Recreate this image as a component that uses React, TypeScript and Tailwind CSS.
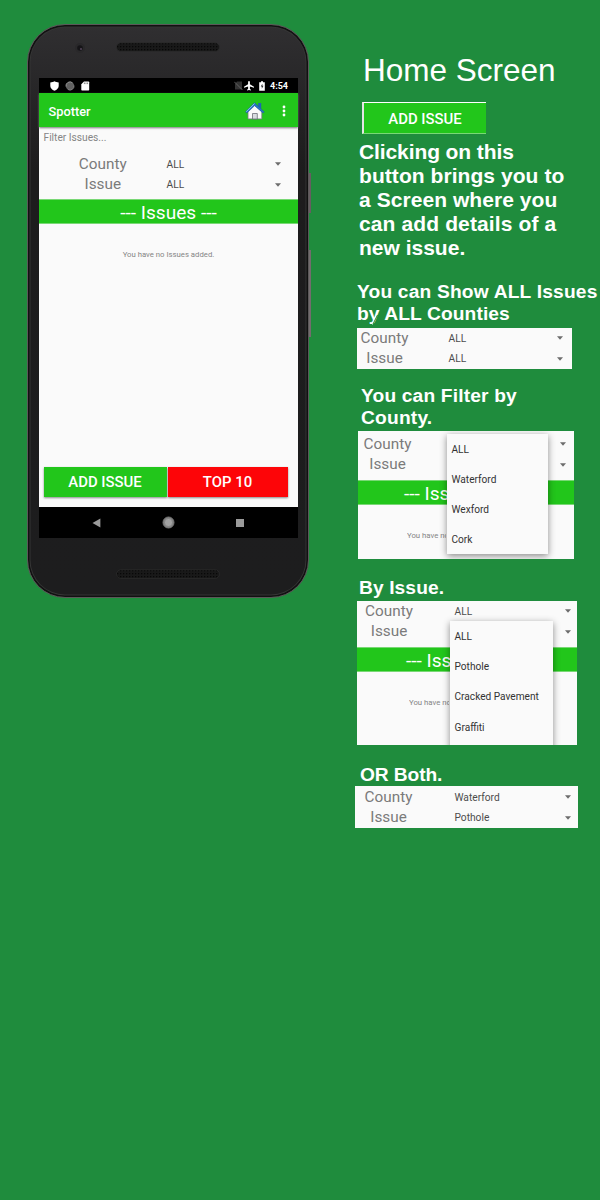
import React from "react";

function Caret() {
  return (
    <svg width="6" height="4" viewBox="0 0 6 4" className="block shrink-0">
      <path d="M0 0.2h6L3 3.8z" fill="#6c6c6c" />
    </svg>
  );
}

type RowProps = { label: string; value?: string; labelClass: string; caretClass: string };

function FilterRow({ label, value, labelClass, caretClass }: RowProps) {
  return (
    <div className="flex h-[20.5px] items-center whitespace-nowrap">
      <div className={"shrink-0 text-center text-[15.3px] leading-none text-[#7b7b7b] " + labelClass}>{label}</div>
      <div className="flex-1 pt-px text-[10.2px] leading-none text-[#4c4c4c]">{value}</div>
      <div className={caretClass}>
        <Caret />
      </div>
    </div>
  );
}

function Speaker() {
  return (
    <svg width="104" height="10" viewBox="0 0 104 10" className="block">
      <defs>
        <pattern id="mesh" width="3" height="3" patternUnits="userSpaceOnUse">
          <rect width="3" height="3" fill="#191919" />
          <rect x="1" y="1" width="1.3" height="1.3" fill="#080808" />
        </pattern>
      </defs>
      <rect x="0.5" y="0.8" width="103" height="8.6" rx="4.3" fill="url(#mesh)" stroke="#2e2e2e" strokeWidth="0.7" />
    </svg>
  );
}

function StatusBar() {
  return (
    <div className="flex h-[15px] shrink-0 items-center bg-black pr-[10px] pl-[11px] text-white">
      <svg width="9" height="10" viewBox="0 0 9 10">
        <path d="M4.5 0.3C3.3 1.1 2 1.4 0.3 1.5V5c0 2.200 1.800 3.900 4.200 4.700C6.900 8.900 8.700 7.200 8.700 5V1.500C7 1.400 5.700 1.100 4.500 0.300z" fill="#fff" />
      </svg>
      <svg width="10" height="10" viewBox="0 0 10 10" className="ml-[6px]">
        <circle cx="5" cy="5" r="4.200" fill="#626262" />
        <path d="M1 5.500A4 4 0 0 1 7.500 1.800" fill="none" stroke="#929292" />
        <path d="M9 4.500A4 4 0 0 1 3 8.500" fill="none" stroke="#858585" strokeWidth="0.800" />
      </svg>
      <svg width="9" height="10" viewBox="0 0 9 10" className="ml-[6px]">
        <path d="M3 0.500h4.500q0.700 0 0.700 0.700v7.600q0 0.700-0.700 0.700h-6.500q-0.700 0-0.700-0.700V3.300z" fill="#fff" />
        <path d="M3.400 1.500v1.600M5 1.500v1.600M6.600 1.500v1.600" stroke="#555" strokeWidth="0.700" />
      </svg>
      <div className="flex-1" />
      <svg width="9" height="9" viewBox="0 0 9 9">
        <path d="M3 0.500H8v8H1V3z" fill="#333" />
        <path d="M0.300 0.800l8 8" stroke="#666" strokeWidth="0.900" />
      </svg>
      <svg width="10" height="10" viewBox="0 0 20 20" className="ml-[1.500px]">
        <path d="M20 13.500v-2l-8.200-5V1.800a1.800 1.800 0 0 0-3.600 0v4.700L0 11.500v2l8.200-2.500v5l-2.200 1.600v1.500l4-1 4 1v-1.500L11.800 16v-5z" fill="#fff" />
      </svg>
      <svg width="6" height="10" viewBox="0 0 6 10" className="ml-[4.500px]">
        <path d="M2 0.300h2v0.900h1.800v8.600H0.200V1.200H2z" fill="#fff" />
        <path d="M3.400 2.800L1.700 5.600h1.100v2.200l1.700-3H3.400z" fill="#333" />
      </svg>
      <span className="ml-[5px] pt-px text-[9px] leading-none font-bold">4:54</span>
    </div>
  );
}

function HomeIcon() {
  return (
    <svg width="20" height="18" viewBox="0 0 20 18" className="block">
      <path d="M13.200 1h3v6l-3-2.600z" fill="#1d66b5" />
      <path d="M3 9.300L9.500 3l7.300 6.700v7.200H3z" fill="#fafafa" stroke="#777a83" strokeWidth="0.800" />
      <path d="M7.500 17v-5.500h4.800v5.500z" fill="#d8dbe0" stroke="#6d7078" strokeWidth="0.800" />
      <path d="M0.500 9.800L9.500 0.700l9.800 9.200-1.300 1.100-8.400-7.300-7.800 7.400z" fill="#2a74c6" stroke="#1c5ca5" strokeWidth="0.500" />
      <path d="M1.200 9.700L9.500 1.500" stroke="#8fc4ef" strokeWidth="0.900" />
    </svg>
  );
}

function IssuesBar({ className, children }: { className: string; children: React.ReactNode }) {
  return (
    <div className={"flex h-[25px] items-center overflow-hidden border-y border-[#79d875] bg-[#22c61b] pt-[2px] text-[19.100px] leading-none whitespace-nowrap text-white " + className}>
      {children}
    </div>
  );
}

function Phone() {
  return (
    <div className="relative mt-[24px] ml-[27px] h-[574px] w-[284px] shrink-0">
      <div className="absolute top-[149px] right-0 h-[40px] w-[4px] bg-[#665d61]" />
      <div className="absolute top-[226px] right-0 h-[87px] w-[4px] bg-[#736c6e]" />
      <div className="relative flex h-[574px] w-[282px] flex-col rounded-[38px] border-[1.500px] border-[#5b5859] bg-linear-to-b from-[#302f31] via-[#1d1c1d] via-25% to-[#1d1d1e] px-[11px] shadow-[inset_0_0_0_1.500px_#111,inset_0_0_0_2.500px_#353535]">
        <div className="flex h-[53px] shrink-0 items-start pt-[17px]">
          <svg width="12" height="12" viewBox="0 0 12 12" className="ml-[34.500px]">
            <circle cx="6" cy="6" r="5" fill="#29282a" />
            <circle cx="6" cy="6" r="2.800" fill="#151417" />
            <circle cx="7" cy="7" r="1" fill="#55465c" />
          </svg>
          <div className="ml-[30px]">
            <Speaker />
          </div>
        </div>
        <div className="flex h-[460px] w-[259px] shrink-0 flex-col bg-[#fafafa]">
          <StatusBar />
          <div className="relative flex h-[34px] shrink-0 items-center bg-[#22c61b] pt-px pl-[9.500px] shadow-[0_1px_2px_#777]">
            <span className="pt-[3px] text-[12.800px] leading-none font-medium text-white">Spotter</span>
            <div className="ml-auto">
              <HomeIcon />
            </div>
            <svg width="4" height="12" viewBox="0 0 4 12" className="mr-[12px] ml-[17px]">
              <circle cx="2" cy="2" r="1.400" fill="#fff" />
              <circle cx="2" cy="6" r="1.400" fill="#fff" />
              <circle cx="2" cy="10" r="1.400" fill="#fff" />
            </svg>
          </div>
          <div className="pt-[6px] pl-[4.500px] text-[10.200px] leading-none text-[#858585]">Filter Issues...</div>
          <div className="mt-[11px]">
            <FilterRow label="County" value="ALL" labelClass="w-[127.500px]" caretClass="mr-[17px]" />
            <FilterRow label="Issue" value="ALL" labelClass="w-[127.500px]" caretClass="mr-[17px]" />
          </div>
          <div className="mt-[4px]">
            <IssuesBar className="justify-center">--- Issues ---</IssuesBar>
          </div>
          <div className="mt-[26.500px] text-center text-[7.750px] leading-none text-[#858585]">You have no Issues added.</div>
          <div className="mt-auto mb-[10.500px] flex gap-[1px] px-[4.500px] text-[14.900px] leading-none font-medium text-white">
            <div className="flex h-[30px] w-[123px] items-center justify-center bg-[#22c61b] pt-[2px] shadow-[0_1px_2px_#888]">ADD ISSUE</div>
            <div className="flex h-[30px] w-[120px] items-center justify-center bg-[#fd0508] pt-[2px] shadow-[0_1px_2px_#888]">TOP 10</div>
          </div>
          <div className="flex h-[31px] shrink-0 items-center bg-black">
            <svg width="9" height="10" viewBox="0 0 9 10" className="ml-[53px]">
              <path d="M0.500 5L8.400 0.500v9z" fill="#9a9a9a" />
            </svg>
            <svg width="13" height="13" viewBox="0 0 13 13" className="ml-[60.500px]">
              <circle cx="6.500" cy="6.500" r="5.500" fill="#858585" stroke="#777" />
              <circle cx="6.500" cy="6.500" r="4" fill="#a2a2a2" stroke="#777" strokeWidth="0.500" />
            </svg>
            <div className="ml-[61px] h-[8px] w-[8px] bg-[#9a9a9a]" />
          </div>
        </div>
        <div className="flex justify-center pt-[31px]">
          <Speaker />
        </div>
      </div>
    </div>
  );
}

type PanelProps = {
  className: string;
  labelClass: string;
  caretClass: string;
  titleClass: string;
  noteClass: string;
  menuClass: string;
  value?: string;
  options: string[];
};

function MenuPanel({ className, labelClass, caretClass, titleClass, noteClass, menuClass, value, options }: PanelProps) {
  return (
    <div className={"relative overflow-hidden bg-[#fafafa] " + className}>
      <FilterRow label="County" value={value} labelClass={labelClass} caretClass={caretClass} />
      <FilterRow label="Issue" labelClass={labelClass} caretClass={caretClass} />
      <div className="mt-[5px]">
        <IssuesBar className={titleClass}>--- Iss</IssuesBar>
      </div>
      <div className={"mt-[26.500px] text-[7.750px] leading-none whitespace-nowrap text-[#858585] " + noteClass}>You have no</div>
      <div className={"absolute bg-[#fafafa] pt-[0.500px] pl-[5px] text-[10.150px] text-[#333] shadow-[0_2px_7px_rgba(0,0,0,0.45)] " + menuClass}>
        {options.map((option) => (
          <div key={option} className="flex h-[30.200px] items-center pt-px leading-none whitespace-nowrap">
            {option}
          </div>
        ))}
      </div>
    </div>
  );
}

function Heading({ className, children }: { className: string; children: React.ReactNode }) {
  return (
    <div className={"font-['Liberation_Sans',sans-serif] text-[19.200px] leading-[22px] font-bold whitespace-nowrap text-white " + className}>
      {children}
    </div>
  );
}

export default function App() {
  return (
    <div className="flex h-[1200px] w-[600px] overflow-hidden bg-[#1f8c3d] font-[Roboto,sans-serif]">
      <Phone />
      <div className="ml-[44px] flex w-[245px] shrink-0 flex-col">
        <h1 className="mt-[52px] pl-[8px] font-['Liberation_Sans',sans-serif] text-[31.500px] leading-[36px] whitespace-nowrap text-white">
          Home Screen
        </h1>
        <div className="mt-[14px] ml-[7px] flex h-[32px] w-[124px] items-center justify-center border-t border-b border-l-2 border-t-white border-b-[#79d875] border-l-[#e4e4e4] bg-[#22c61b] pt-[2px] text-[14.900px] leading-none font-medium text-white">
          ADD ISSUE
        </div>
        <p className="mt-[6px] ml-[4px] font-['Liberation_Sans',sans-serif] text-[21px] leading-[24px] font-bold whitespace-nowrap text-white">
          <span className="tracking-[-0.100px]">Clicking on this</span>
          <br />
          <span className="tracking-[0.060px]">button brings you to</span>
          <br />
          <span className="tracking-[0.060px]">a Screen where you</span>
          <br />
          <span className="tracking-[0.120px]">can add details of a</span>
          <br />
          new issue.
        </p>
        <Heading className="relative mt-[21px] ml-[2px]">
          <span className="tracking-[0.180px]">You can Show ALL Issues</span>
          <br />
          <span className="tracking-[0.100px]">by ALL Counties</span>
          <svg width="10" height="11" viewBox="0 0 10 11" className="absolute top-[33px] left-[12px]">
            <path d="M8.500 1L4 10" stroke="#1f8c3d" strokeWidth="1" />
            <path d="M1 8.500h1.500M3 10h1" stroke="#d5f4ef" />
          </svg>
        </Heading>
        <div className="mt-[3px] ml-[2px] h-[41px] w-[215px] bg-[#fafafa]">
          <FilterRow label="County" value="ALL" labelClass="w-[55px] mr-[36.500px]" caretClass="mr-[9.500px]" />
          <FilterRow label="Issue" value="ALL" labelClass="w-[55px] mr-[36.500px]" caretClass="mr-[9.500px]" />
        </div>
        <Heading className="mt-[16px] ml-[6px]">
          <span className="tracking-[0.160px]">You can Filter by</span>
          <br />
          <span className="tracking-[0.200px]">County.</span>
        </Heading>
        <MenuPanel
          className="mt-[2px] ml-[3px] h-[128px] w-[216px] pt-[3px]"
          labelClass="w-[59px] mr-[34px]"
          caretClass="mr-[8.500px]"
          titleClass="pl-[46px]"
          noteClass="ml-[49px] w-[39px] overflow-hidden"
          menuClass="top-[2.500px] left-[88.500px] h-[120px] w-[101px]"
          options={["ALL", "Waterford", "Wexford", "Cork"]}
        />
        <Heading className="mt-[18px] ml-[4px] tracking-[0.100px]">By Issue.</Heading>
        <MenuPanel
          className="mt-[2px] ml-[2px] h-[144px] w-[220px]"
          labelClass="w-[64px] mr-[33.500px]"
          caretClass="mr-[6.500px]"
          titleClass="pl-[49px]"
          noteClass="ml-[52px] w-[40px] overflow-hidden"
          menuClass="top-[20px] left-[92.500px] h-[150px] w-[103px]"
          value="ALL"
          options={["ALL", "Pothole", "Cracked Pavement", "Graffiti"]}
        />
        <Heading className="mt-[19px] ml-[5px] tracking-[-0.100px]">OR Both.</Heading>
        <div className="mt-0 h-[42px] w-[223px] bg-[#fafafa] pt-[1px]">
          <FilterRow label="County" value="Waterford" labelClass="w-[67px] mr-[32.500px]" caretClass="mr-[7px]" />
          <FilterRow label="Issue" value="Pothole" labelClass="w-[67px] mr-[32.500px]" caretClass="mr-[7px]" />
        </div>
      </div>
    </div>
  );
}
